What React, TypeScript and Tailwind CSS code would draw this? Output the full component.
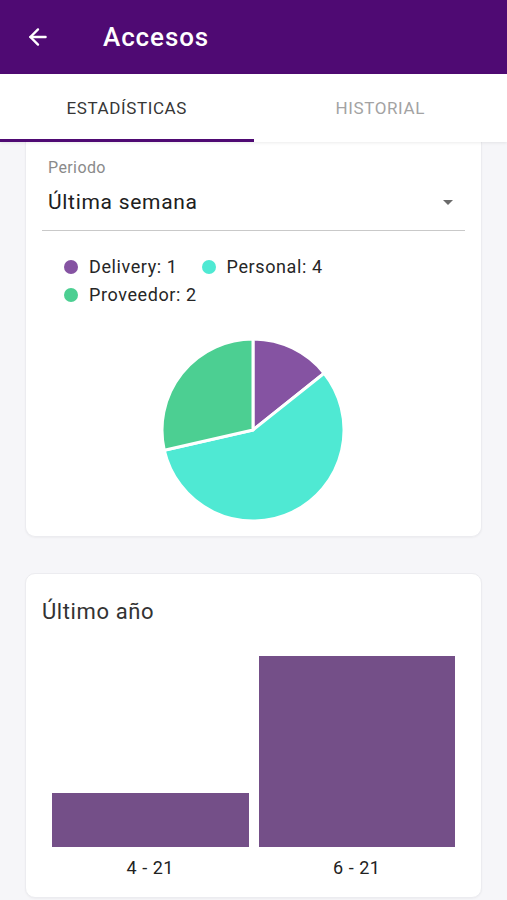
import { ArrowLeft } from "lucide-react";

const legend = [
  { label: "Delivery: 1", color: "bg-[#8553a2]" },
  { label: "Personal: 4", color: "bg-[#4fe9d3]" },
  { label: "Proveedor: 2", color: "bg-[#4ccf92]" },
];

const bars = [
  { label: "4 - 21", height: 54 },
  { label: "6 - 21", height: 191 },
];

// slice path for pie, angles in degrees from 12 o'clock
const slice = (cx: number, cy: number, r: number, a0: number, a1: number) => {
  const p = (a: number) => {
    const rad = ((a - 90) * Math.PI) / 180;
    return `${cx + r * Math.cos(rad)} ${cy + r * Math.sin(rad)}`;
  };
  const large = a1 - a0 > 180 ? 1 : 0;
  return `M ${cx} ${cy} L ${p(a0)} A ${r} ${r} 0 ${large} 1 ${p(a1)} Z`;
};

const PieChart = () => {
  const total = 7;
  const values = [
    { v: 1, fill: "#8553a2" },
    { v: 4, fill: "#4fe9d3" },
    { v: 2, fill: "#4ccf92" },
  ];
  let start = 0;
  return (
    <svg width="186" height="186" viewBox="0 0 186 186">
      {values.map((s, i) => {
        const end = start + (s.v / total) * 360;
        const d = slice(93, 93, 91, start, end);
        start = end;
        return <path key={i} d={d} fill={s.fill} stroke="#ffffff" strokeWidth="3" strokeLinejoin="round" />;
      })}
    </svg>
  );
};

const App = () => {
  return (
    <div className="min-h-[900px] bg-[#f6f6f9] font-['Roboto',sans-serif]">
      {/* App bar */}
      <header className="h-[74px] bg-[#4f0a73] flex items-center text-white">
        <ArrowLeft className="ml-[25px] h-[26px] w-[26px]" strokeWidth={2.2} />
        <h1 className="ml-[52px] text-[26px] font-medium tracking-[0.9px]">Accesos</h1>
      </header>

      {/* Tabs */}
      <nav className="h-[68px] bg-white flex shadow-[0_1px_3px_rgba(0,0,0,0.08)] relative z-10">
        <div className="flex-1 flex flex-col">
          <div className="flex-1 flex items-center justify-center pt-[5px] text-[17px] text-[#363636] tracking-[0.6px]">
            ESTADÍSTICAS
          </div>
          <div className="h-[3px] bg-[#4f0a73]" />
        </div>
        <div className="flex-1 flex flex-col">
          <div className="flex-1 flex items-center justify-center pt-[5px] text-[17px] text-[#a3a3a3] tracking-[0.6px]">
            HISTORIAL
          </div>
          <div className="h-[3px]" />
        </div>
      </nav>

      <main className="px-[25px] flex flex-col gap-[36px] pb-[3px]">
        {/* Weekly card */}
        <section className="h-[395px] bg-white rounded-b-[10px] border border-t-0 border-[#ececf0] shadow-[0_1px_2px_rgba(0,0,0,0.04)] px-[16px] pt-[16px]">
          <div className="px-[6px] text-[16px] text-[#8a8a8a] leading-[20px] tracking-[0.4px]">Periodo</div>
          <div className="flex items-center justify-between border-b border-[#c9c9c9] h-[53px] pl-[6px] pr-[12px] pb-[3px]">
            <span className="text-[21px] text-[#202020] tracking-[0.7px]">Última semana</span>
            <span className="w-0 h-0 border-l-[5px] border-r-[5px] border-t-[5px] border-l-transparent border-r-transparent border-t-[#6b6b6b]" />
          </div>

          <div className="mt-[22px] pl-[22px] flex flex-wrap w-[320px] gap-x-[24px] text-[18px] text-[#262626] leading-[28px] tracking-[0.6px]">
            {legend.map((l) => (
              <div key={l.label} className="flex items-center gap-[11px]">
                <span className={`w-[14px] h-[14px] rounded-full ${l.color}`} />
                <span>{l.label}</span>
              </div>
            ))}
          </div>

          <div className="flex justify-center mt-[28px] -ml-[2px]">
            <PieChart />
          </div>
        </section>

        {/* Yearly card */}
        <section className="h-[325px] bg-white rounded-[10px] border border-[#ececf0] shadow-[0_1px_2px_rgba(0,0,0,0.04)] px-[26px] pt-[21px]">
          <h2 className="-ml-[10px] text-[22px] text-[#333333] tracking-[0.6px]">Último año</h2>
          <div className="mt-[28px] h-[191px] flex items-end gap-[10px]">
            {bars.map((b) => (
              <div key={b.label} className="flex-1 bg-[#744f88]" style={{ height: b.height }} />
            ))}
          </div>
          <div className="flex gap-[10px] mt-[7px]">
            {bars.map((b) => (
              <div key={b.label} className="flex-1 text-center text-[18px] text-[#222222] tracking-[0.5px]">
                {b.label}
              </div>
            ))}
          </div>
        </section>
      </main>
    </div>
  );
};

export default App;
